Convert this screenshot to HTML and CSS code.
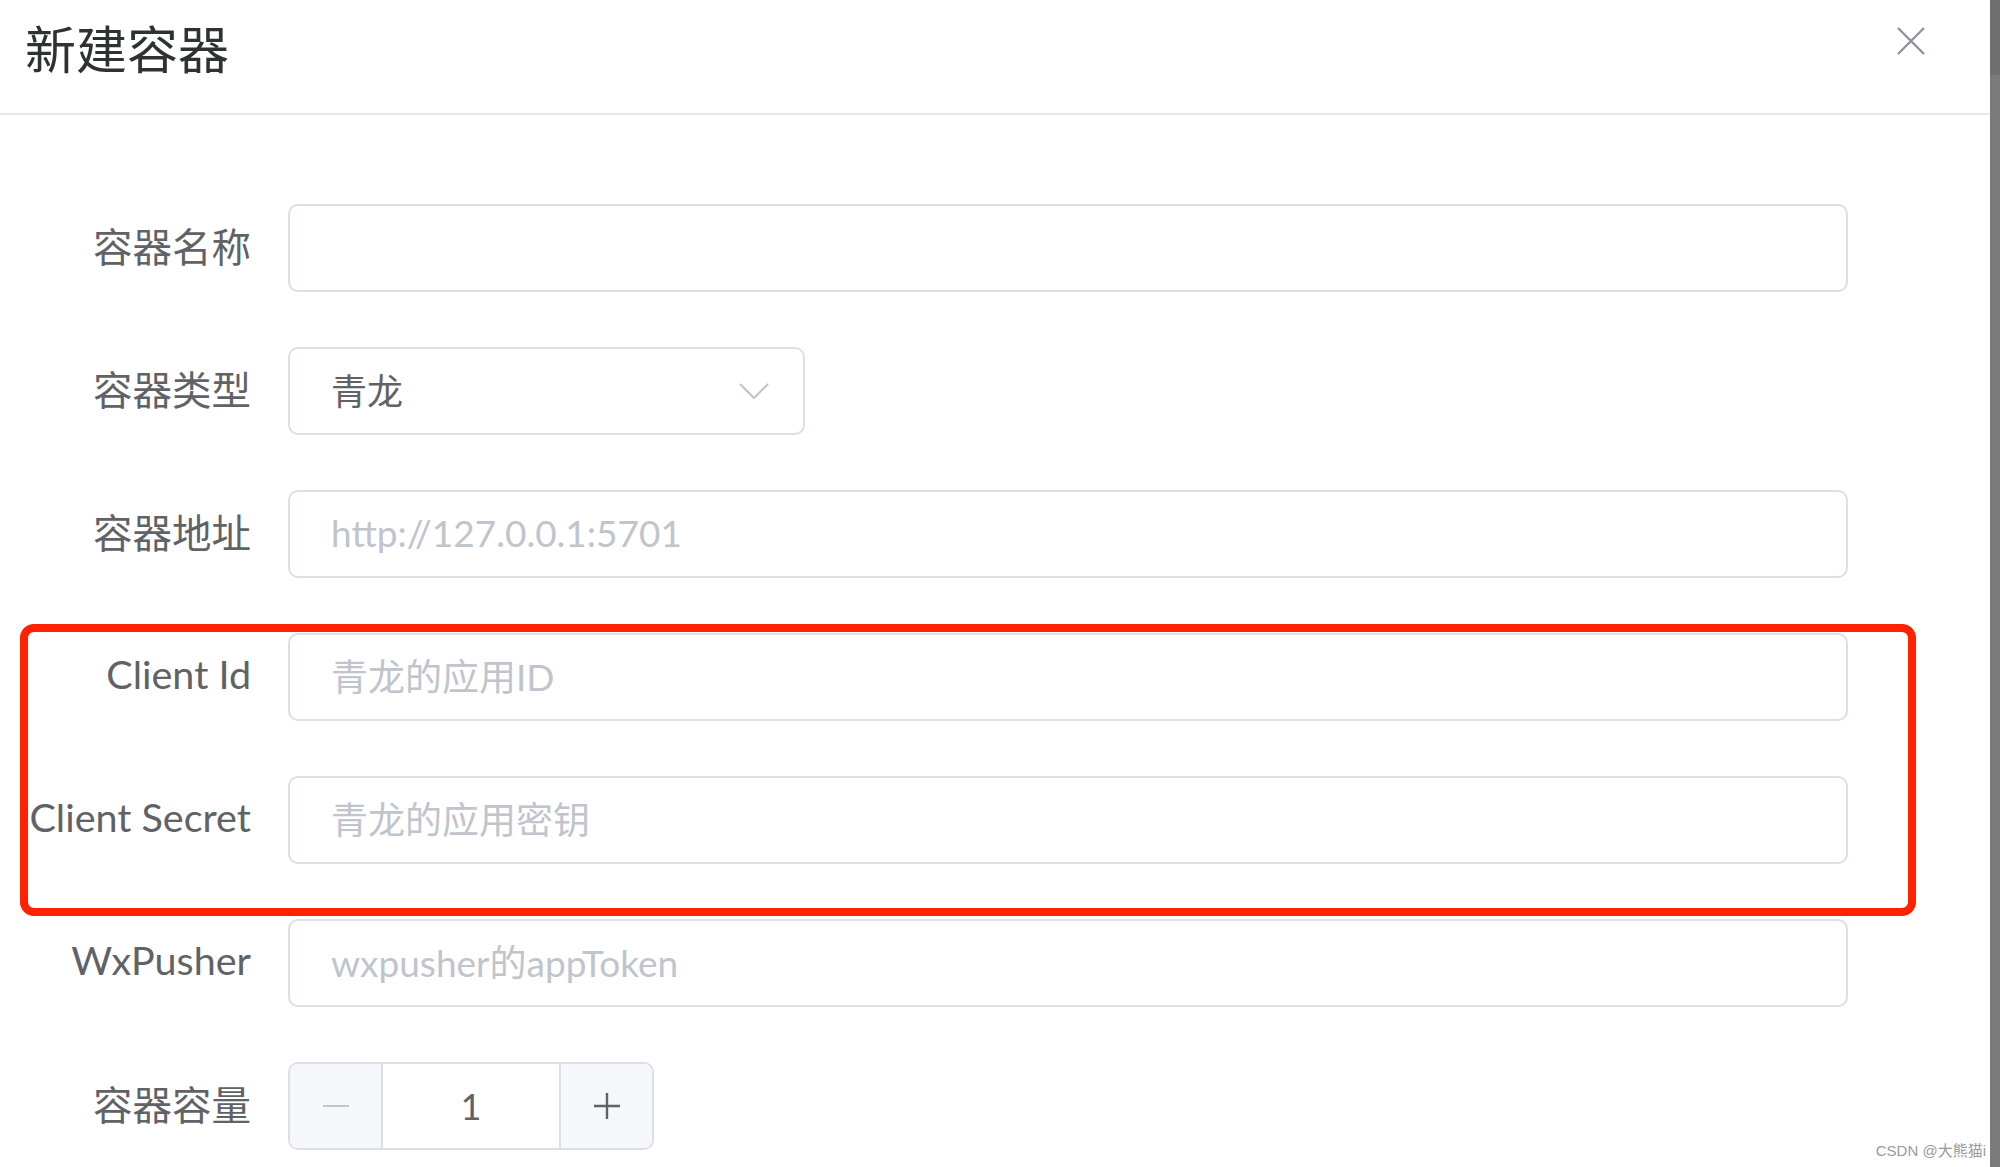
FILE: index.html
```html
<!DOCTYPE html>
<html lang="zh">
<head>
<meta charset="utf-8">
<title>新建容器</title>
<link rel="stylesheet" href="styles.css">
</head>
<body>
<div class="page">
  <div class="dialog">
    <div class="dialog-header">
      <span class="dialog-title">新建容器</span>
      <svg class="close" width="30" height="30" viewBox="0 0 30 30"><path d="M2 2 L28 28 M28 2 L2 28" stroke="#909399" stroke-width="2.4" fill="none"/></svg>
    </div>
    <div class="form">
      <div class="label">容器名称</div>
      <div class="field"><div class="input"></div></div>

      <div class="label">容器类型</div>
      <div class="field"><div class="input select"><span class="value">青龙</span>
        <svg class="chev" width="32" height="18" viewBox="0 0 32 18"><path d="M2 2 L16 16 L30 2" stroke="#c0c4cc" stroke-width="2.2" fill="none"/></svg></div></div>

      <div class="label">容器地址</div>
      <div class="field"><div class="input"><span class="ph">http://127.0.0.1:5701</span></div></div>

      <div class="label">Client Id</div>
      <div class="field"><div class="input"><span class="ph">青龙的应用ID</span></div></div>

      <div class="label">Client Secret</div>
      <div class="field"><div class="input"><span class="ph">青龙的应用密钥</span></div></div>

      <div class="label">WxPusher</div>
      <div class="field"><div class="input"><span class="ph">wxpusher的appToken</span></div></div>

      <div class="label">容器容量</div>
      <div class="field">
        <div class="number">
          <div class="num-btn minus"><svg width="28" height="4" viewBox="0 0 28 4"><path d="M1 2 H27" stroke="#c0c4cc" stroke-width="2.2"/></svg></div>
          <div class="num-val">1</div>
          <div class="num-btn plus"><svg width="28" height="28" viewBox="0 0 28 28"><path d="M1 14 H27 M14 1 V27" stroke="#606266" stroke-width="2.4"/></svg></div>
        </div>
      </div>
    </div>
    <div class="highlight"></div>
    <div class="watermark">CSDN @大熊猫i</div>
  </div>
  <div class="scrollbar"></div>
</div>
</body>
</html>
```
FILE: styles.css
```css
html, body {
  margin: 0;
  padding: 0;
  background: #ffffff;
}
body {
  font-family: Lato, "Noto Sans CJK SC", sans-serif;
  overflow: hidden;
}
.page {
  display: flex;
  width: 2000px;
  height: 1167px;
}
.dialog {
  position: relative;
  flex: 1;
  height: 1167px;
  background: #ffffff;
}
.scrollbar {
  width: 10px;
  height: 1167px;
  background: linear-gradient(#6f6f6f 0, #6f6f6f 75px, #7b7b7b 75px);
}
.dialog-header {
  height: 113px;
  border-bottom: 2px solid #e4e7ed;
  display: flex;
  align-items: center;
  justify-content: space-between;
  padding: 0 64px 0 25px;
  box-sizing: content-box;
}
.dialog-title {
  font-size: 51px;
  color: #303133;
  line-height: 1;
  margin-top: -14px;
}
.close {
  margin-top: -32px;
}
.form {
  display: grid;
  grid-template-columns: 231px 1560px;
  column-gap: 37px;
  row-gap: 55px;
  grid-auto-rows: 88px;
  padding: 89px 0 0 20px;
}
.label {
  display: flex;
  align-items: center;
  justify-content: flex-end;
  font-size: 39.5px;
  color: #606266;
  white-space: nowrap;
  margin-top: -7px;
}
.field {
  display: flex;
  align-items: stretch;
}
.input {
  flex: 1;
  box-sizing: border-box;
  border: 2px solid #dcdfe6;
  border-radius: 10px;
  display: flex;
  align-items: center;
  padding: 0 41px;
  font-size: 37px;
  color: #606266;
}
.ph {
  color: #c0c4cc;
  margin-top: -4px;
}
.select {
  flex: 0 0 517px;
  justify-content: space-between;
  padding-right: 33px;
}
.select .value {
  font-size: 36px;
  margin-top: -4px;
}
.number {
  display: flex;
  width: 366px;
  box-sizing: border-box;
  border: 2px solid #dcdfe6;
  border-radius: 10px;
  overflow: hidden;
}
.num-btn {
  width: 91px;
  background: #f5f7fa;
  display: flex;
  align-items: center;
  justify-content: center;
}
.minus {
  border-right: 2px solid #dcdfe6;
}
.plus {
  border-left: 2px solid #dcdfe6;
}
.num-val {
  flex: 1;
  display: flex;
  align-items: center;
  justify-content: center;
  font-size: 36px;
  color: #606266;
}
.highlight {
  position: absolute;
  left: 20px;
  top: 624px;
  width: 1896px;
  height: 292px;
  box-sizing: border-box;
  border: 8px solid #ff2200;
  border-radius: 14px;
  pointer-events: none;
}
.watermark {
  position: absolute;
  right: 4px;
  bottom: 7px;
  font-family: "Liberation Sans", "Noto Sans CJK SC", sans-serif;
  font-size: 15px;
  color: #9a9a9a;
}
```
